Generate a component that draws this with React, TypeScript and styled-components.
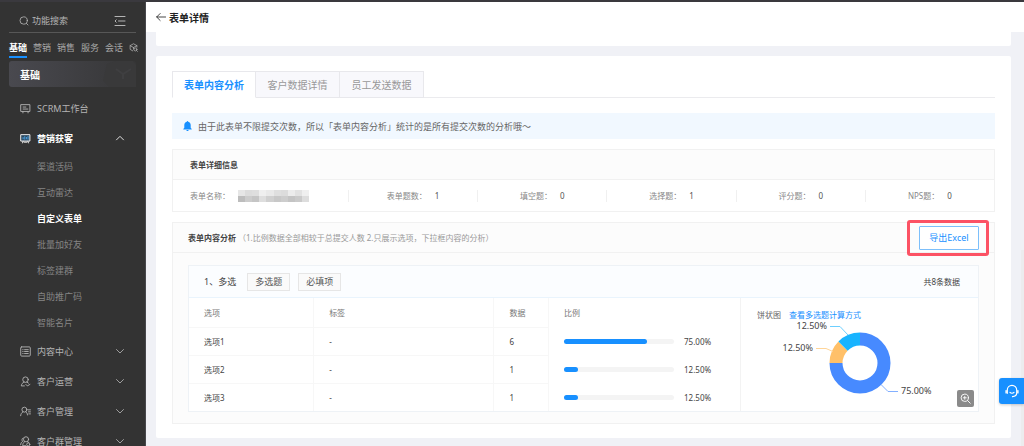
import React from 'react';
import styled, { createGlobalStyle } from 'styled-components';

const Global = createGlobalStyle`
  *, *::before, *::after { box-sizing: border-box; }
  html, body { margin: 0; height: 100%; }
  body {
    font-family: "Noto Sans", "Noto Sans CJK SC", sans-serif;
    font-size: 8px;
    color: #555;
    background: #f0f1f6;
  }
  button, input { font: inherit; margin: 0; padding: 0; border: 0; background: none; color: inherit; }
  button { cursor: pointer; }
  a { color: #1890ff; text-decoration: none; }
  ul, dl, dd { list-style: none; margin: 0; padding: 0; }
  h1, h2, p { margin: 0; }
  svg { display: block; flex: none; }
`;

const Shell = styled.div`
  display: flex;
  height: 100vh;
  overflow: hidden;
  border-top: 2px solid #3a393e;
`;

/* ---------- sidebar ---------- */

const Sidebar = styled.aside`
  flex: none;
  width: 146px;
  padding: 0 9px;
  overflow: hidden;
  background: #333;
  border-right: 1px solid #48484c;
  color: #b4b4b4;
  font-size: 9px;
`;

const SearchRow = styled.div`
  display: flex;
  align-items: center;
  height: 31px;
  padding: 7px 10px 0 10px;
  border-bottom: 1px solid #575757;
`;

const SearchInput = styled.input`
  flex: 1;
  min-width: 0;
  margin-left: 3px;
  outline: none;
  &::placeholder { color: #b4b4b4; opacity: 1; }
`;

const IconButton = styled.button`
  display: flex;
  align-items: center;
  justify-content: center;
`;

const ModuleTabs = styled.nav`
  display: flex;
  align-items: center;
  gap: 6px;
  height: 26px;
  margin-bottom: 2px;
  padding-top: 3px;
  white-space: nowrap;
`;

const ModuleTab = styled.a<{ $active?: boolean }>`
  height: 21px;
  line-height: 21px;
  color: ${p => (p.$active ? '#fff' : '#a8a8a8')};
  font-weight: ${p => (p.$active ? 700 : 400)};
  border-bottom: ${p => (p.$active ? '2px solid #1890ff' : '0')};
`;

const ModuleBanner = styled.div`
  display: flex;
  align-items: center;
  justify-content: space-between;
  height: 26px;
  padding-left: 11px;
  border-radius: 3px;
  background: linear-gradient(90deg, #49494f, #363637);
  color: #fff;
  font-size: 10px;
  font-weight: 700;
`;

const Menu = styled.nav`
  padding-top: 6px;
`;

const MenuItem = styled.a<{ $active?: boolean }>`
  display: flex;
  align-items: center;
  height: 30px;
  padding: 0 11px;
  color: ${p => (p.$active ? '#fff' : '#b4b4b4')};
  font-weight: ${p => (p.$active ? 700 : 400)};
  span { flex: 1; margin-left: 6px; white-space: nowrap; }
`;

const SubMenu = styled.div`
  padding-top: 1px;
`;

const SubItem = styled.a<{ $active?: boolean }>`
  display: block;
  height: 26px;
  padding-left: 28px;
  line-height: 26px;
  color: ${p => (p.$active ? '#fff' : '#858585')};
  font-weight: ${p => (p.$active ? 700 : 400)};
`;

/* ---------- main area ---------- */

const Main = styled.main`
  display: flex;
  flex-direction: column;
  flex: 1;
  min-width: 0;
`;

const PageHeader = styled.header`
  display: flex;
  align-items: center;
  gap: 3px;
  flex: none;
  height: 30px;
  padding-left: 10px;
  background: #fff;
  color: #222;
`;

const PageTitle = styled.h1`
  font-size: 10px;
  font-weight: 700;
`;

const Content = styled.div`
  flex: 1;
  padding: 0 13px 8px 10px;
  overflow: hidden;
`;

const PreviousCard = styled.div`
  height: 14px;
  margin-bottom: 10px;
  background: #fff;
  border-radius: 0 0 2px 2px;
`;

const Card = styled.section`
  padding: 15px 16px 14px;
  background: #fff;
  border-radius: 2px;
`;

const Tabs = styled.div`
  display: flex;
  height: 27px;
  border-bottom: 1px solid #ebebee;
`;

const Tab = styled.button<{ $active?: boolean }>`
  width: 84px;
  height: 27px;
  border: 1px solid #e8e8ec;
  border-left-width: ${p => (p.$active ? '1px' : '0')};
  border-bottom-color: ${p => (p.$active ? '#fff' : '#e8e8ec')};
  background: ${p => (p.$active ? '#fff' : '#f8f8fc')};
  color: ${p => (p.$active ? '#1890ff' : '#999')};
  font-size: 10px;
  font-weight: ${p => (p.$active ? 700 : 400)};
`;

const Notice = styled.div`
  display: flex;
  align-items: center;
  gap: 6px;
  height: 26px;
  margin: 15px 0 10px;
  padding-left: 11px;
  background: #f1f8ff;
  color: #666;
  font-size: 9px;
`;

const Panel = styled.section`
  border: 1px solid #f1f1f1;
  background: #fcfcfc;
  & + & { margin-top: 10px; }
`;

const PanelHead = styled.div<{ $inset: number }>`
  display: flex;
  align-items: center;
  height: 30px;
  padding: 0 15px 0 ${p => p.$inset}px;
  border-bottom: 1px solid #f1f1f1;
`;

const PanelTitle = styled.h2`
  color: #444;
  font-size: 8px;
  font-weight: 700;
`;

const PanelNote = styled.p`
  flex: 1;
  margin-left: 2px;
  color: #999;
`;

const Summary = styled.dl`
  display: grid;
  grid-template-columns: 175px repeat(5, 1fr);
  align-items: center;
  height: 31px;
  background: #fff;
`;

const SummaryItem = styled.div`
  display: flex;
  align-items: center;
  justify-content: center;
  height: 12px;
  border-left: 1px solid #f0f0f0;
  white-space: nowrap;
  &:first-child { justify-content: flex-start; padding-left: 17px; border-left: 0; }
  dt { color: #888; }
  dd { margin-left: 8px; color: #555; }
`;

const ExportWrap = styled.div`
  position: relative;
`;

const ExportButton = styled.button`
  display: block;
  width: 60px;
  height: 24px;
  border: 1px solid #7cbffb;
  border-radius: 1px;
  background: #fff;
  color: #1890ff;
  font-size: 9px;
`;

const Highlight = styled.div`
  position: absolute;
  inset: -6px -10px -6px -12px;
  border: 3px solid #fc5264;
  border-radius: 3px;
  pointer-events: none;
`;

const Question = styled.article`
  margin: 12px 15px 11px;
  border: 1px solid #eef2f6;
  background: #fff;
`;

const QuestionHead = styled.header`
  display: flex;
  align-items: center;
  gap: 8px;
  height: 32px;
  padding: 0 18px 0 15px;
  border-bottom: 1px solid #e9f4fd;
  background: #fbfdff;
`;

const QuestionName = styled.span`
  margin-right: 3px;
  color: #444;
  font-size: 9px;
`;

const Tag = styled.span`
  height: 18px;
  padding: 0 7px;
  border: 1px solid #e6e6e6;
  background: #fafafa;
  color: #555;
  font-size: 9px;
  line-height: 16px;
`;

const Total = styled.span`
  margin-left: auto;
  color: #444;
`;

const QuestionBody = styled.div`
  display: flex;
`;

const Table = styled.table`
  flex: 1;
  table-layout: fixed;
  border-collapse: collapse;
  color: #444;

  th, td {
    height: 28px;
    padding: 0 0 0 15px;
    text-align: left;
    font-weight: 400;
    border-right: 1px solid #f7f7f7;
    border-bottom: 1px solid #f7f7f7;
  }
  th { height: 29px; color: #777; }
  th:last-child, td:last-child { border-bottom: 0; border-right-color: #f3f3f3; }
  tr:last-child td { border-bottom: 0; }
`;

const Ratio = styled.div`
  display: flex;
  align-items: center;
  gap: 10px;
`;

const Track = styled.div`
  flex: none;
  width: 110px;
  height: 5px;
  border-radius: 3px;
  background: #f4f4f4;
`;

const Fill = styled.div`
  height: 5px;
  border-radius: 3px;
  background: #1890ff;
`;

const ChartPanel = styled.div`
  position: relative;
  width: 237px;
  padding: 11px 0 0 1px;
`;

const ChartTitle = styled.div`
  display: flex;
  gap: 8px;
  height: 12px;
  padding-left: 15px;
  color: #666;
  line-height: 12px;
`;

const ChartDrawing = styled.svg`
  overflow: visible;
`;

const ChartText = styled.text`
  font-size: 9px;
  fill: #444;
`;

const EnlargeButton = styled(IconButton)`
  position: absolute;
  right: 4px;
  bottom: 4px;
  width: 17px;
  height: 17px;
  border-radius: 2px;
  background: #8a8a8a;
`;

const ServiceButton = styled(IconButton)`
  position: fixed;
  right: 0;
  top: 378px;
  width: 25px;
  height: 26px;
  border-radius: 3px 0 0 3px;
  background: #1890ff;
  box-shadow: 0 1px 3px #0003;
`;

const ScrollThumb = styled.div`
  position: fixed;
  right: 0;
  top: 250px;
  bottom: 0;
  width: 3px;
  background: #ececee;
`;

/* ---------- drawings ---------- */

const Icon = ({ size = 11, children, color = 'currentColor' }: { size?: number; children: React.ReactNode; color?: string }) => (
  <svg width={size} height={size} viewBox="0 0 12 12" fill="none" stroke={color} strokeWidth="1" strokeLinecap="round" strokeLinejoin="round" aria-hidden="true">
    {children}
  </svg>
);

const Chevron = ({ up }: { up?: boolean }) => (
  <Icon size={10}>
    <path d={up ? 'M1.8 8.2 6 4l4.2 4.2' : 'M1.8 4.2 6 8.4l4.2-4.2'} />
  </Icon>
);

const WorkbenchIcon = () => (
  <Icon><path d="M1.2 1.8h9.6v7.4H1.2zM3.2 9.4v1.4M8.8 9.4v1.4M3.4 4.4h3M3.4 6.6h5.2" /></Icon>
);
const MarketingIcon = () => (
  <Icon>
    <path d="M1.2 1.8h9.6v7H1.2z" fill="#2d4a60" />
    <path d="M3.4 9l-.6 1.8M8.6 9l.6 1.8M4.6 10h2.8" />
    <path d="M3.4 6.4V5M5.2 6.8V4M7 6.4V4.8M8.8 6.8V3.8" stroke="#4fa9ef" />
  </Icon>
);
const ContentIcon = () => (
  <Icon><rect x="0.8" y="1" width="10.4" height="10" rx="1" /><path d="M3 4h.4M5 4h4M3 6h.4M5 6h4M3 8.2h.4M5 8.2h4" /></Icon>
);
const OperateIcon = () => (
  <Icon><circle cx="6" cy="4" r="3" /><path d="M4.4 6.6C2.6 7.4 1.6 8.8 1.4 10.8h3.4M6.4 9.2l1.6 1.6 2.8-1.6M7.4 6.6l1.8 1.2" /></Icon>
);
const ManageIcon = () => (
  <Icon><circle cx="4.8" cy="4" r="2.7" /><path d="M3.2 6.4C1.6 7.4.9 8.7.7 10.6M6.4 6.4c1 .6 1.6 1.6 1.8 3.4M8.8 4.2h2.6M9.2 6.4h2.2M9.6 8.6h1.8" /></Icon>
);
const GroupIcon = () => (
  <Icon><circle cx="6.6" cy="3.6" r="2.8" /><path d="M3.2 2.2C1.8 3 1.8 5 3 5.8 1.6 6.6.8 7.8.7 9.6M5 6.2C3.6 7.2 3 8.6 2.9 10.6h3.5M8.2 6.2l1.6 1" /><circle cx="9" cy="9.2" r="1.7" /></Icon>
);

const mosaic = [
  ['#e6e6e6', '#dcdcdc', '#dedede', '#efefef', '#e9e9e9', '#dfdfdf', '#dcdcdc', '#ececec', '#e2e2e2', '#efefef'],
  ['#bdbdbd', '#cccccc', '#c5c5c5', '#dedede', '#d0d0d0', '#c8c8c8', '#cdcdcd', '#c4c4c4', '#cacaca', '#dddddd'],
];

const MaskedName = () => (
  <svg width="71" height="12" viewBox="0 0 71 12" shapeRendering="crispEdges" role="img" aria-label="已隐藏">
    {mosaic.map((row, y) => row.map((c, x) => <rect key={`${x}-${y}`} x={x * 7.1} y={y * 6} width="7.2" height="6" fill={c} />))}
  </svg>
);

const Donut = () => (
  <ChartDrawing width="236" height="87" viewBox="0 -1 236 87" role="img" aria-label="饼状图">
    <g fill="none" strokeWidth="13">
      <path d="M118 17a24 24 0 1 1-24 24" stroke="#478aff" />
      <path d="M94 41a24 24 0 0 1 7.03-16.97" stroke="#ffc069" />
      <path d="M101.03 24.03A24 24 0 0 1 118 17" stroke="#18b4ff" />
    </g>
    <g fill="none" strokeWidth="1">
      <path d="M88 4.5h10l8 8.5" stroke="#6dcfff" />
      <path d="M74 26.5h10l7 3" stroke="#ffd598" />
      <path d="M139.5 63l6.5 6.5h10" stroke="#83b0ff" />
    </g>
    <ChartText x="85" y="7" textAnchor="end">12.50%</ChartText>
    <ChartText x="71" y="29" textAnchor="end">12.50%</ChartText>
    <ChartText x="159" y="72">75.00%</ChartText>
  </ChartDrawing>
);

/* ---------- data ---------- */

const subItems = ['渠道活码', '互动雷达', '自定义表单', '批量加好友', '标签建群', '自助推广码', '智能名片'];

const groups = [
  { name: '内容中心', icon: <ContentIcon /> },
  { name: '客户运营', icon: <OperateIcon /> },
  { name: '客户管理', icon: <ManageIcon /> },
  { name: '客户群管理', icon: <GroupIcon /> },
];

const summary = [
  ['表单题数：', 1],
  ['填空题：', 0],
  ['选择题：', 1],
  ['评分题：', 0],
  ['NPS题：', 0],
] as const;

const options = [
  { name: '选项1', count: 6, ratio: 75 },
  { name: '选项2', count: 1, ratio: 12.5 },
  { name: '选项3', count: 1, ratio: 12.5 },
];

export default function App() {
  return (
    <>
      <Global />
      <Shell>
        <Sidebar>
          <SearchRow>
            <Icon size={10}><circle cx="5.6" cy="5.4" r="4.4" /><path d="M8.8 8.8l2 2" /></Icon>
            <SearchInput type="text" placeholder="功能搜索" aria-label="功能搜索" />
            <IconButton aria-label="收起菜单">
              <Icon size={12}><path d="M1 1.5h10M4.5 6H11M1 10.5h10M2.2 4.8L1 6l1.2 1.2" /></Icon>
            </IconButton>
          </SearchRow>
          <ModuleTabs>
            <ModuleTab href="#base" $active>基础</ModuleTab>
            <ModuleTab href="#marketing">营销</ModuleTab>
            <ModuleTab href="#sales">销售</ModuleTab>
            <ModuleTab href="#service">服务</ModuleTab>
            <ModuleTab href="#chat">会话</ModuleTab>
            <Icon size={9}><path d="M10.5 5.5v-2L6 1 1.5 3.5v5L5 10.5M1.5 3.5L6 6l4.5-2.5M6 6v2" /><circle cx="8.6" cy="8.6" r="2" /><path d="M10.2 10.2l1 1" /></Icon>
          </ModuleTabs>
          <ModuleBanner>
            基础
            <svg width="34" height="26" viewBox="0 0 34 26" aria-hidden="true">
              <path d="M5 3l9-3h17l3 4v22H8l-7-6z" fill="#39393a" />
              <path d="M14 8l7 5 8-5M21 13v5" fill="none" stroke="#3f3f41" strokeWidth="2" />
            </svg>
          </ModuleBanner>
          <Menu>
            <MenuItem href="#workbench"><WorkbenchIcon /><span>SCRM工作台</span></MenuItem>
            <MenuItem href="#acquire" $active><MarketingIcon /><span>营销获客</span><Chevron up /></MenuItem>
            <SubMenu>
              {subItems.map(name => (
                <SubItem key={name} href="#sub" $active={name === '自定义表单'}>{name}</SubItem>
              ))}
            </SubMenu>
            {groups.map(g => (
              <MenuItem key={g.name} href="#group">{g.icon}<span>{g.name}</span><Chevron /></MenuItem>
            ))}
          </Menu>
        </Sidebar>

        <Main>
          <PageHeader>
            <IconButton aria-label="返回">
              <Icon size={10}><path d="M11.5 6H.8M5 1.8L.8 6 5 10.2" /></Icon>
            </IconButton>
            <PageTitle>表单详情</PageTitle>
          </PageHeader>
          <Content>
            <PreviousCard />
            <Card>
              <Tabs role="tablist">
                <Tab role="tab" aria-selected="true" $active>表单内容分析</Tab>
                <Tab role="tab" aria-selected="false">客户数据详情</Tab>
                <Tab role="tab" aria-selected="false">员工发送数据</Tab>
              </Tabs>
              <Notice>
                <svg width="9" height="10" viewBox="0 0 9 10" fill="#1890ff" aria-hidden="true">
                  <path d="M4.5 0c.5 0 .7.3.7.7C6.9 1.1 7.7 2.4 7.7 4v2.8L8.7 8v.4H.3V8l1-1.2V4c0-1.6.8-2.9 2.5-3.3C3.8.3 4 0 4.5 0zM3.3 8.9h2.4C5.6 9.6 5.1 10 4.5 10S3.4 9.6 3.3 8.9z" />
                </svg>
                由于此表单不限提交次数，所以「表单内容分析」统计的是所有提交次数的分析哦～
              </Notice>

              <Panel>
                <PanelHead $inset={17}><PanelTitle>表单详细信息</PanelTitle></PanelHead>
                <Summary>
                  <SummaryItem><dt>表单名称：</dt><dd><MaskedName /></dd></SummaryItem>
                  {summary.map(([label, value]) => (
                    <SummaryItem key={label}><dt>{label}</dt><dd>{value}</dd></SummaryItem>
                  ))}
                </Summary>
              </Panel>

              <Panel>
                <PanelHead $inset={15}>
                  <PanelTitle>表单内容分析</PanelTitle>
                  <PanelNote>（1.比例数据全部相较于总提交人数 2.只展示选项，下拉框内容的分析）</PanelNote>
                  <ExportWrap>
                    <ExportButton>导出Excel</ExportButton>
                    <Highlight />
                  </ExportWrap>
                </PanelHead>
                <Question>
                  <QuestionHead>
                    <QuestionName>1、多选</QuestionName>
                    <Tag>多选题</Tag>
                    <Tag>必填项</Tag>
                    <Total>共8条数据</Total>
                  </QuestionHead>
                  <QuestionBody>
                    <Table>
                      <colgroup>
                        <col style={{ width: '22.6%' }} />
                        <col style={{ width: '32.7%' }} />
                        <col style={{ width: '9.9%' }} />
                        <col />
                      </colgroup>
                      <thead>
                        <tr><th>选项</th><th>标签</th><th>数据</th><th>比例</th></tr>
                      </thead>
                      <tbody>
                        {options.map(o => (
                          <tr key={o.name}>
                            <td>{o.name}</td>
                            <td>-</td>
                            <td>{o.count}</td>
                            <td>
                              <Ratio>
                                <Track><Fill style={{ width: `${o.ratio}%` }} /></Track>
                                {o.ratio.toFixed(2)}%
                              </Ratio>
                            </td>
                          </tr>
                        ))}
                      </tbody>
                    </Table>
                    <ChartPanel>
                      <ChartTitle>饼状图<a href="#method">查看多选题计算方式</a></ChartTitle>
                      <Donut />
                      <EnlargeButton aria-label="放大">
                        <Icon size={11} color="#fff"><circle cx="5.2" cy="5.2" r="4" /><path d="M8.2 8.2l3 3M3.6 5.2h3.2M5.2 3.6v3.2" /></Icon>
                      </EnlargeButton>
                    </ChartPanel>
                  </QuestionBody>
                </Question>
              </Panel>
            </Card>
          </Content>
        </Main>
      </Shell>
      <ScrollThumb />
      <ServiceButton aria-label="在线客服">
        <svg width="14" height="14" viewBox="0 0 14 14" fill="none" stroke="#fff" strokeWidth="1.2" strokeLinecap="round" aria-hidden="true">
          <path d="M2.3 6a4.7 4.7 0 0 1 9.4 0v3c0 2-1.7 3.4-4.2 3.6M1 6.5v2.4M13 6.5v2.4M2.3 6v3.3M11.7 6v3.3M5 8.3c1 1 3 1 4 0" />
        </svg>
      </ServiceButton>
    </>
  );
}
